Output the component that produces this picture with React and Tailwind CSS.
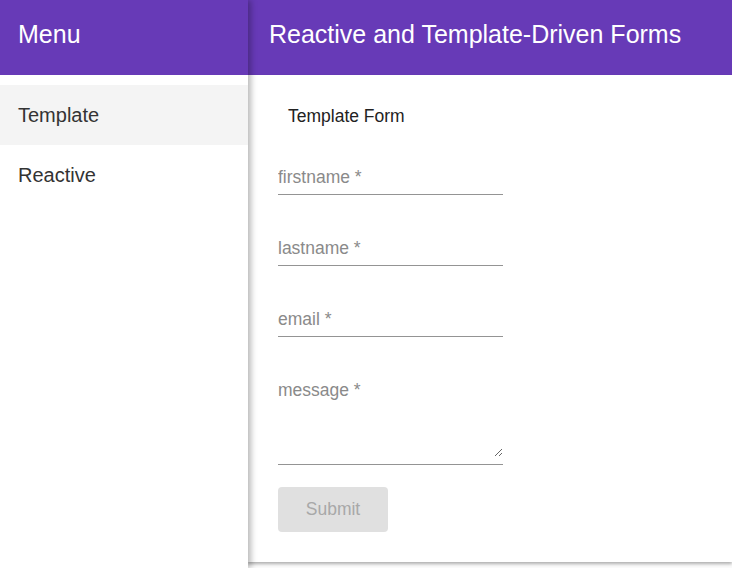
import React from 'react';

const fields = ['firstname', 'lastname', 'email'];

const App = () => {
    return (
        <div className="flex h-[568px] w-full overflow-hidden bg-[#fafafa] font-['Liberation_Sans',Arial,sans-serif]">

            {/* Sidebar */}
            <aside className="relative z-10 flex w-[248px] shrink-0 flex-col bg-white shadow-[3px_0_6px_rgba(0,0,0,0.28)]">
                <div className="flex h-[75px] items-center bg-[#673ab7] pb-[5px] pl-[18px] text-[25px] text-white">
                    Menu
                </div>
                <nav className="pt-[10px]">
                    <div className="flex h-[60px] items-center bg-[#f4f4f4] pl-[18px] text-[20px] text-[#333]">Template</div>
                    <div className="flex h-[60px] items-center pl-[18px] text-[20px] text-[#333]">Reactive</div>
                </nav>
            </aside>

            {/* Main */}
            <main className="flex min-w-0 flex-1 flex-col">
                <div className="flex h-[75px] shrink-0 items-center bg-[#673ab7] pb-[5px] pl-[21px] text-[25px] whitespace-nowrap text-white">
                    Reactive and Template-Driven Forms
                </div>

                <div className="bg-white pb-[30px] pl-[30px] pt-[29px] shadow-[0_2px_3px_rgba(0,0,0,0.3)]">
                    <div className="pl-[10px] text-[17.5px] leading-[24px] text-[#222]">Template Form</div>

                    <form className="mt-[38px] flex w-[225px] flex-col" onSubmit={(e) => e.preventDefault()}>
                        {fields.map((f, i) => (
                            <input
                                key={f}
                                type="text"
                                placeholder={`${f} *`}
                                className={`h-[29px] w-full border-b border-[#949494] bg-transparent pb-[6px] text-[17.5px] text-[#222] outline-none placeholder:text-[#8a8a8a] ${i > 0 ? 'mt-[42px]' : ''}`}
                            />
                        ))}
                        <div className="mt-[42px] border-b border-[#949494] pb-[7px]">
                            <textarea
                                placeholder="message *"
                                className="block h-[78px] w-full bg-transparent text-[17.5px] leading-[22px] text-[#222] outline-none placeholder:text-[#8a8a8a]"
                            />
                        </div>
                        <button
                            type="submit"
                            disabled
                            className="mt-[22px] h-[45px] w-[110px] rounded-[4px] bg-[#e0e0e0] text-[17.5px] text-[#a8a8a8]"
                        >
                            Submit
                        </button>
                    </form>
                </div>
            </main>
        </div>
    );
};

export default App;
